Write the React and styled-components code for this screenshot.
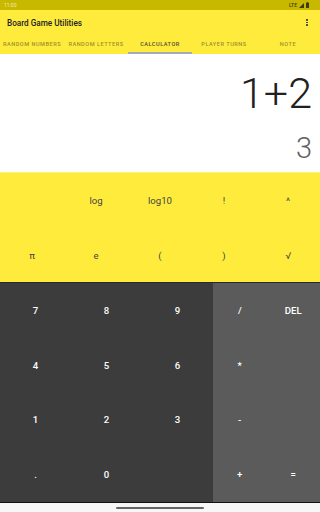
import React from "react";
import styled, { createGlobalStyle } from "styled-components";

const GlobalStyle = createGlobalStyle`
  html, body { margin: 0; padding: 0; }
  body {
    width: 320px;
    height: 512px;
    overflow: hidden;
    font-family: Roboto, "Noto Sans", sans-serif;
    background: #fafafa;
  }
  * { box-sizing: border-box; }
`;

const Screen = styled.div`
  width: 320px;
  height: 512px;
  display: flex;
  flex-direction: column;
  overflow: hidden;
`;

const StatusBar = styled.div`
  height: 10px;
  flex: none;
  background: #c9b800;
  display: flex;
  align-items: center;
  justify-content: space-between;
  padding: 0 11px 0 4px;
  color: #f3ebb0;
  font-size: 5px;
  line-height: 1;
`;

const StatusIcons = styled.div`
  display: flex;
  align-items: center;
  gap: 2px;
  color: #3d3a10;
  font-weight: 500;
`;

const AppBar = styled.div`
  height: 25px;
  flex: none;
  background: #ffeb3b;
  display: flex;
  align-items: center;
  justify-content: space-between;
  padding: 0 12px 0 7px;
`;

const Title = styled.div`
  font-size: 8.2px;
  font-weight: 500;
  color: #222;
`;

const MenuDots = styled.div`
  display: flex;
  flex-direction: column;
  gap: 1.2px;
  span {
    width: 1.6px;
    height: 1.6px;
    border-radius: 50%;
    background: #333;
  }
`;

const Tabs = styled.div`
  height: 19px;
  flex: none;
  background: #ffeb3b;
  display: grid;
  grid-template-columns: repeat(5, 64px);
`;

const Tab = styled.div`
  position: relative;
  display: flex;
  align-items: center;
  justify-content: center;
  white-space: nowrap;
  font-size: 5.6px;
  font-weight: 500;
  letter-spacing: 0.5px;
  padding-bottom: 1px;
  color: ${(p) => (p.$active ? "#4f4d3a" : "rgba(60, 58, 30, 0.55)")};
  overflow: visible;
  &::after {
    content: "";
    position: absolute;
    left: 0;
    right: 0;
    bottom: 0;
    height: 2px;
    background: ${(p) => (p.$active ? "#a4aab6" : "transparent")};
  }
`;

const Display = styled.div`
  height: 118px;
  flex: none;
  background: #ffffff;
  display: flex;
  flex-direction: column;
  align-items: flex-end;
  padding: 18px 8px 0 0;
`;

const Expression = styled.div`
  font-size: 43px;
  line-height: 43px;
  font-weight: 300;
  color: #212121;
`;

const Result = styled.div`
  margin-top: 19px;
  font-size: 29px;
  line-height: 29px;
  font-weight: 300;
  color: #616161;
`;

const SciPad = styled.div`
  height: 110px;
  flex: none;
  background: #ffeb3b;
  display: grid;
  grid-template-columns: repeat(5, 64px);
  grid-template-rows: repeat(2, 55px);
  border-top: 1px solid #fff27a;
`;

const Key = styled.div`
  display: flex;
  align-items: center;
  justify-content: center;
  font-size: 9.6px;
  font-weight: ${(p) => (p.$light ? 500 : 400)};
  color: ${(p) => (p.$light ? "#ffffff" : "#454545")};
`;

const Keypad = styled.div`
  height: 220px;
  flex: none;
  display: flex;
  border-top: 1px solid #222a33;
`;

const Digits = styled.div`
  width: 213px;
  background: #3c3c3c;
  display: grid;
  grid-template-columns: repeat(3, 1fr);
  grid-template-rows: repeat(4, 1fr);
`;

const Operators = styled.div`
  flex: 1;
  background: #5b5b5b;
  display: grid;
  grid-template-columns: repeat(2, 1fr);
  grid-template-rows: repeat(4, 1fr);
`;

const NavBar = styled.div`
  flex: 1;
  background: #f7f7f7;
  border-top: 1px solid #111;
  display: flex;
  justify-content: center;
  padding-top: 4px;
`;

const Handle = styled.div`
  width: 88px;
  height: 2px;
  border-radius: 1px;
  background: #666;
`;

const tabs = ["RANDOM NUMBERS", "RANDOM LETTERS", "CALCULATOR", "PLAYER TURNS", "NOTE"];
const sci = ["", "log", "log10", "!", "^", "π", "e", "(", ")", "√"];
const digits = ["7", "8", "9", "4", "5", "6", "1", "2", "3", ".", "0", ""];
const ops = ["/", "DEL", "*", "", "-", "", "+", "="];

export default function App() {
  return (
    <Screen>
      <GlobalStyle />
      <StatusBar>
        <span>11:00</span>
        <StatusIcons>
          <span>LTE</span>
          <svg width="5" height="5" viewBox="0 0 10 10">
            <path d="M10 0 L10 10 L0 10 Z" fill="#3d3a10" />
          </svg>
          <svg width="3" height="6" viewBox="0 0 6 12">
            <rect x="1.5" y="0" width="3" height="1.5" fill="#3d3a10" />
            <rect x="0" y="1.5" width="6" height="10.5" rx="0.5" fill="#3d3a10" />
          </svg>
        </StatusIcons>
      </StatusBar>
      <AppBar>
        <Title>Board Game Utilities</Title>
        <MenuDots>
          <span />
          <span />
          <span />
        </MenuDots>
      </AppBar>
      <Tabs>
        {tabs.map((t) => (
          <Tab key={t} $active={t === "CALCULATOR"}>
            {t}
          </Tab>
        ))}
      </Tabs>
      <Display>
        <Expression>1+2</Expression>
        <Result>3</Result>
      </Display>
      <SciPad>
        {sci.map((k, i) => (
          <Key key={i}>{k}</Key>
        ))}
      </SciPad>
      <Keypad>
        <Digits>
          {digits.map((k, i) => (
            <Key key={i} $light>
              {k}
            </Key>
          ))}
        </Digits>
        <Operators>
          {ops.map((k, i) => (
            <Key key={i} $light>
              {k}
            </Key>
          ))}
        </Operators>
      </Keypad>
      <NavBar>
        <Handle />
      </NavBar>
    </Screen>
  );
}
